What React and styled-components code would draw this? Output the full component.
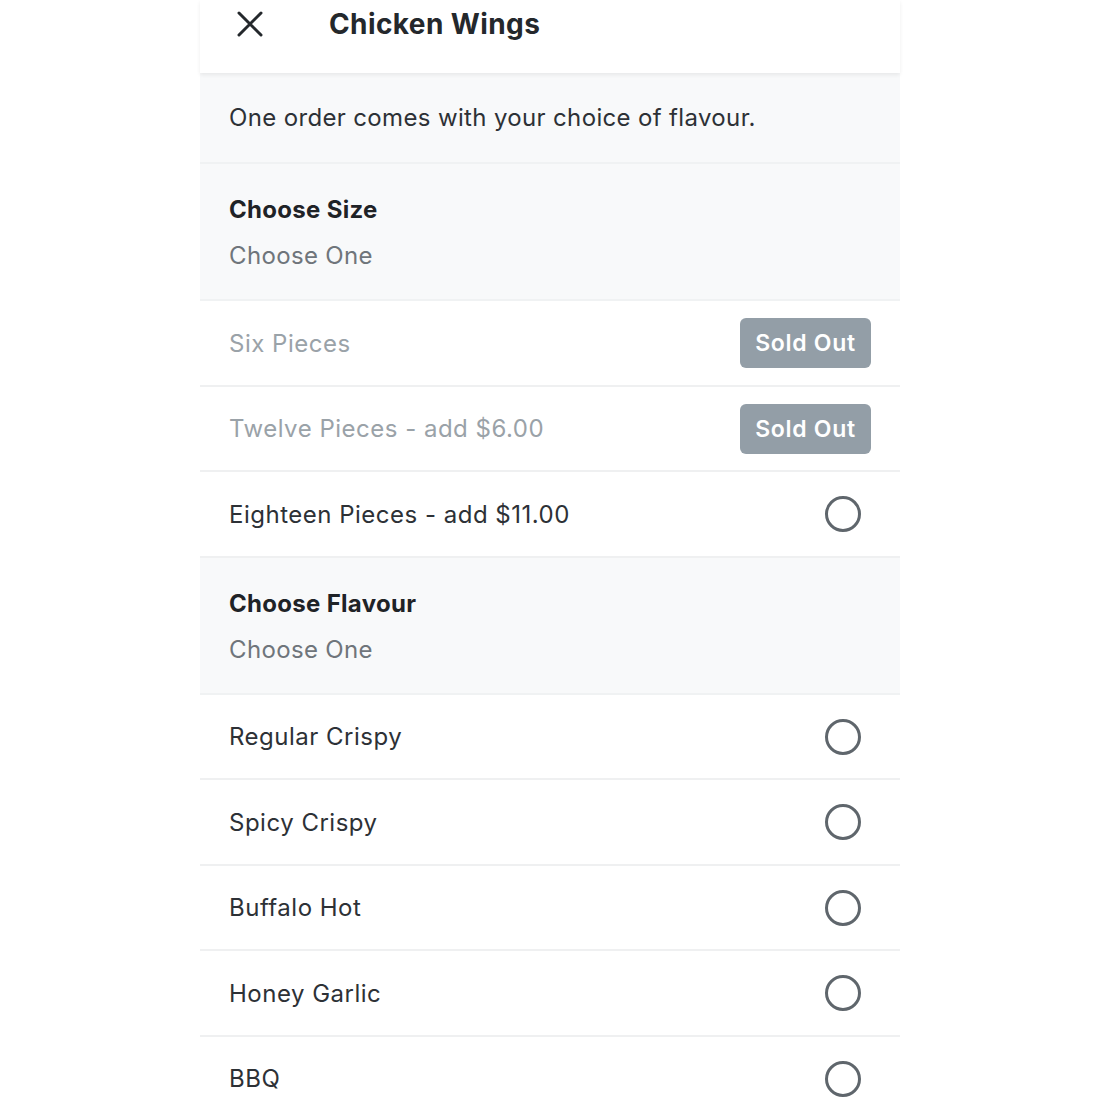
import React from "react";
import styled, { createGlobalStyle } from "styled-components";

const Global = createGlobalStyle`
  html, body { margin: 0; padding: 0; background: #ffffff; }
  body { font-family: Inter, Lato, sans-serif; -webkit-font-smoothing: antialiased; }
`;

const Page = styled.div`
  width: 700px;
  margin: 0 0 0 200px;
  display: flex;
  flex-direction: column;
`;

const Header = styled.header`
  height: 73px;
  display: flex;
  align-items: center;
  padding-bottom: 26px;
  box-sizing: border-box;
  background: #fff;
  box-shadow: 0 2px 4px rgba(0, 0, 0, 0.07);
  position: relative;
  z-index: 1;
`;

const CloseBtn = styled.button`
  border: 0;
  background: none;
  padding: 0;
  margin-left: 36px;
  width: 28px;
  height: 28px;
  display: flex;
  align-items: center;
  justify-content: center;
  cursor: pointer;
`;

const Title = styled.h1`
  margin: 0 0 0 65px;
  font-size: 28px;
  font-weight: 700;
  color: #24282c;
  letter-spacing: 0.4px;
`;

const Description = styled.div`
  background: #f8f9fa;
  height: 91px;
  display: flex;
  align-items: center;
  padding: 0 29px;
  font-size: 24px;
  letter-spacing: 0.35px;
  color: #2d3136;
  border-bottom: 2px solid #f0f2f3;
  box-sizing: border-box;
`;

const SectionHead = styled.div`
  background: #f8f9fa;
  height: 137px;
  display: flex;
  flex-direction: column;
  justify-content: center;
  padding: 2px 29px 0;
  gap: 17px;
  box-sizing: border-box;
  border-bottom: 2px solid #f0f2f3;
`;

const SectionTitle = styled.div`
  font-size: 24px;
  font-weight: 700;
  color: #1f2327;
  letter-spacing: 0.3px;
`;

const SectionSub = styled.div`
  font-size: 24px;
  color: #6f757b;
  letter-spacing: 0.35px;
`;

const Row = styled.div`
  height: 85.5px;
  display: flex;
  align-items: center;
  justify-content: space-between;
  padding: 1px 29px 0;
  box-sizing: border-box;
  border-bottom: 2px solid #eff0f1;
  background: #fff;
`;

const RowLabel = styled.span`
  font-size: 24px;
  color: ${(p) => (p.$disabled ? "#9aa2a8" : "#2d3136")};
  letter-spacing: 0.5px;
`;

const SoldOut = styled.span`
  width: 131px;
  height: 50px;
  border-radius: 6px;
  background: #939ea7;
  color: #fff;
  font-size: 23px;
  font-weight: 600;
  display: flex;
  align-items: center;
  justify-content: center;
  letter-spacing: 0.7px;
`;

const Radio = styled.span`
  width: 30px;
  height: 30px;
  border: 3px solid #5f666c;
  border-radius: 50%;
  margin-right: 10px;
`;

const sizes = [
  { label: "Six Pieces", sold: true },
  { label: "Twelve Pieces - add $6.00", sold: true },
  { label: "Eighteen Pieces - add $11.00", sold: false },
];

const flavours = ["Regular Crispy", "Spicy Crispy", "Buffalo Hot", "Honey Garlic", "BBQ"];

function OptionRow({ label, sold }) {
  return (
    <Row>
      <RowLabel $disabled={sold}>{label}</RowLabel>
      {sold ? <SoldOut>Sold Out</SoldOut> : <Radio />}
    </Row>
  );
}

export default function App() {
  return (
    <>
      <Global />
      <Page>
        <Header>
          <CloseBtn aria-label="Close">
            <svg width="26" height="26" viewBox="0 0 26 26">
              <path d="M2 2 L24 24 M24 2 L2 24" stroke="#24282c" strokeWidth="3" strokeLinecap="round" />
            </svg>
          </CloseBtn>
          <Title>Chicken Wings</Title>
        </Header>
        <Description>One order comes with your choice of flavour.</Description>
        <SectionHead>
          <SectionTitle>Choose Size</SectionTitle>
          <SectionSub>Choose One</SectionSub>
        </SectionHead>
        {sizes.map((s) => (
          <OptionRow key={s.label} label={s.label} sold={s.sold} />
        ))}
        <SectionHead>
          <SectionTitle>Choose Flavour</SectionTitle>
          <SectionSub>Choose One</SectionSub>
        </SectionHead>
        {flavours.map((f) => (
          <OptionRow key={f} label={f} sold={false} />
        ))}
      </Page>
    </>
  );
}
